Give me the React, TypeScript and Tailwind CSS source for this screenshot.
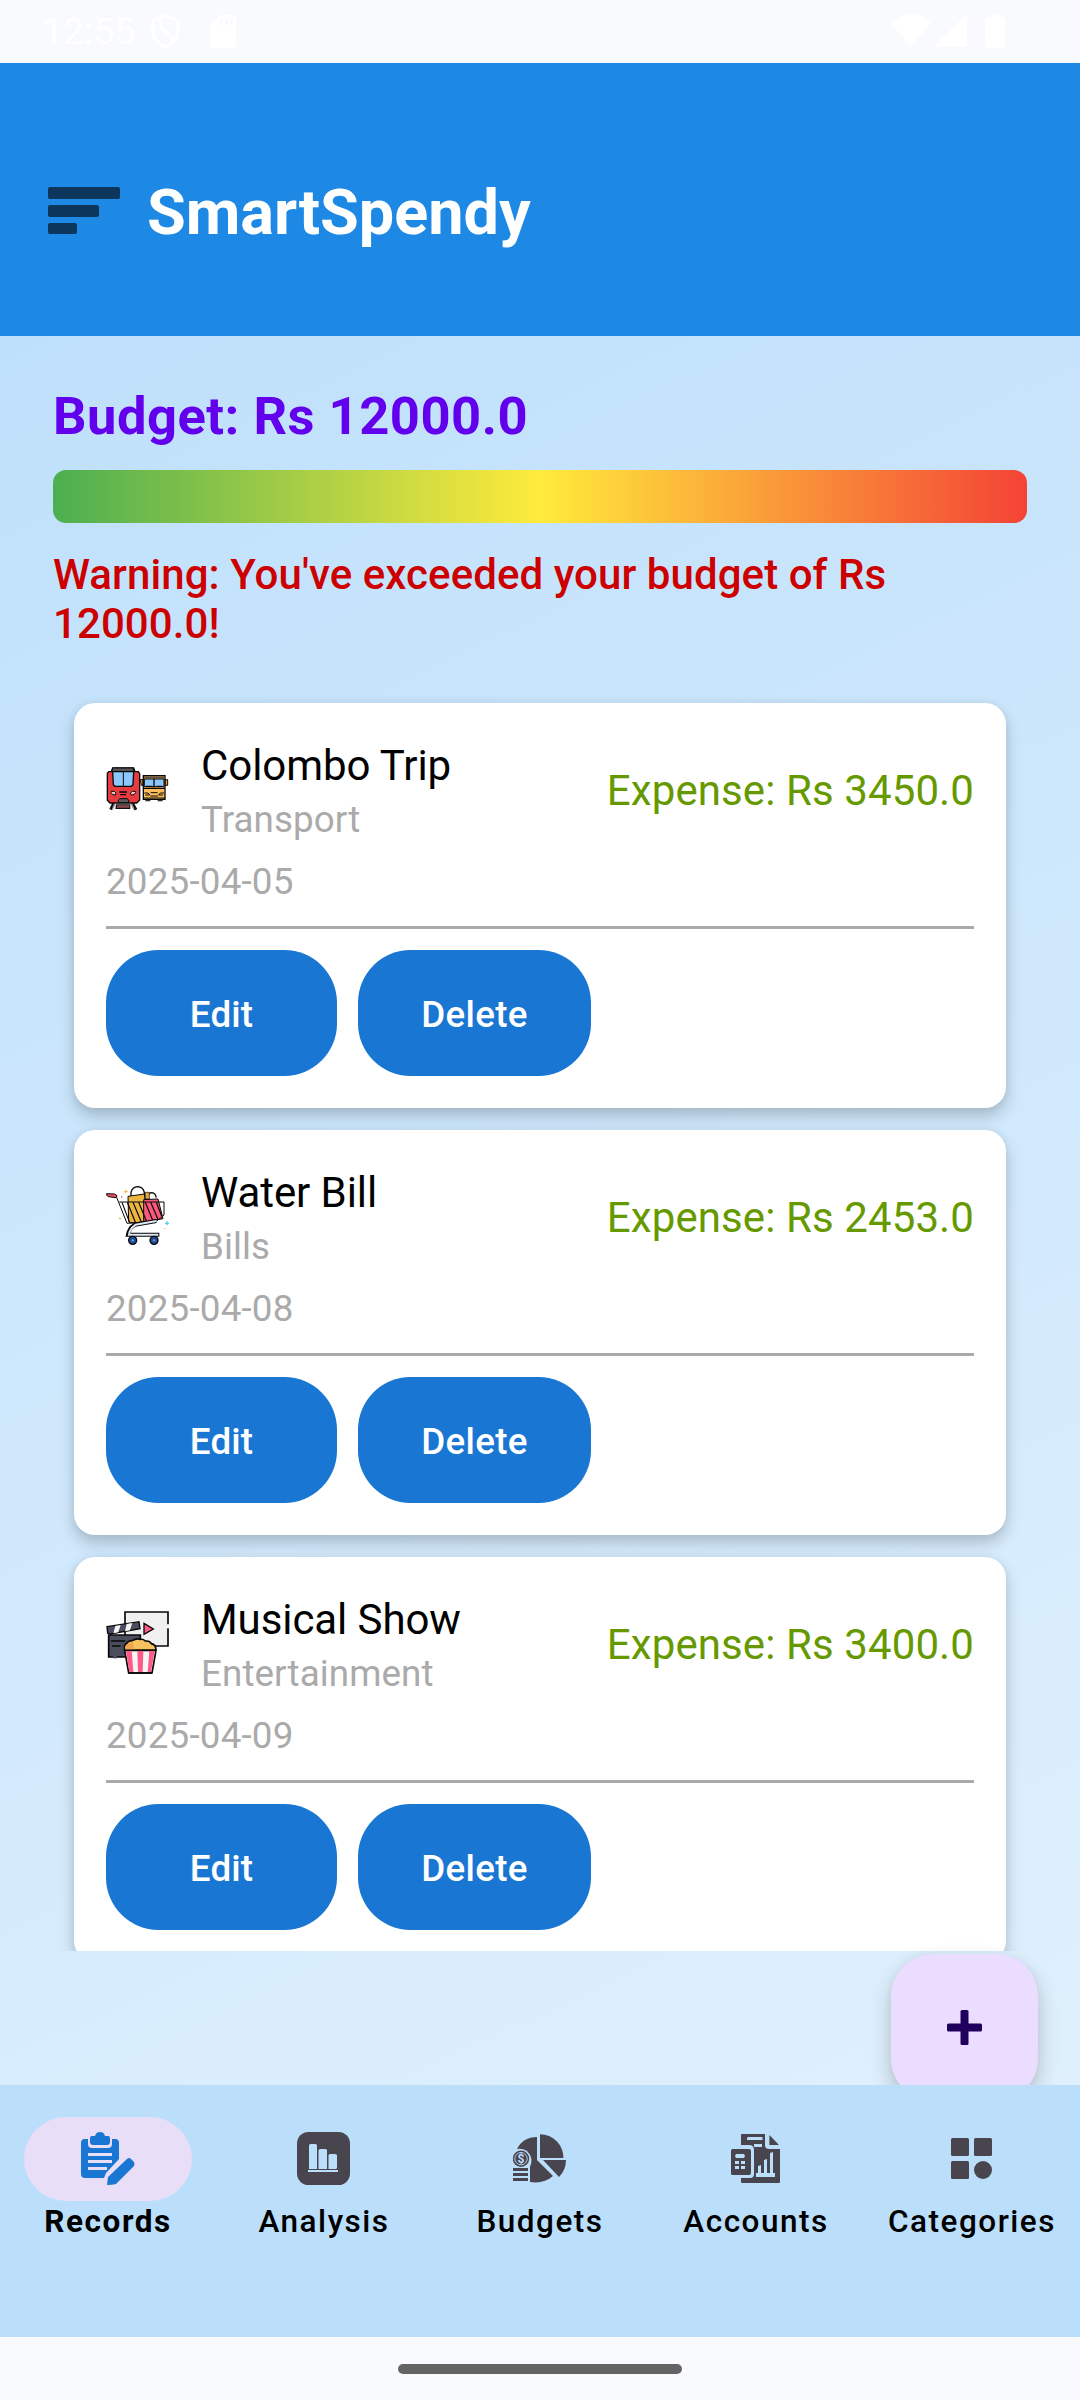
import React from "react";

type IconProps = { children: React.ReactNode };

function StatusBar() {
  return (
    <header className="flex h-[63px] shrink-0 items-start justify-between bg-[#f9fafd] pr-[75px] pl-[42px] text-white">
      <div className="flex items-start">
        <span className="mt-[9px] w-[109px] text-[37.5px] leading-[44px]">12:55</span>
        <svg className="mt-[14px] h-[35px] w-[29px]" viewBox="0 0 29 35" fill="none" stroke="currentColor" strokeWidth="3.4">
          <path d="M14.5 2 27 6.5V16c0 8-5 14-12.500 17C7 30 2 24 2 16V6.500Z" />
          <path d="M9 4c-2 9 3 11 8 15 4 3 5 5 4 9" />
        </svg>
        <svg className="mt-[15px] ml-[30px] h-[33px] w-[26px]" viewBox="0 0 26 33">
          <path fill="currentColor" d="M10 0h13a3 3 0 0 1 3 3v27a3 3 0 0 1-3 3H3a3 3 0 0 1-3-3V10Z" />
          <path fill="#f9fafd" d="M10 4h3v6h-3zM15 4h3v6h-3zM20 4h3v6h-3z" />
        </svg>
      </div>
      <div className="mt-[14px] flex items-start">
        <svg className="h-[33px] w-[40px]" viewBox="0 0 40 33" fill="currentColor">
          <path d="M0 9C12-3 28-3 40 9L20 33Z" />
        </svg>
        <svg className="ml-[2px] h-[33px] w-[34px]" viewBox="0 0 34 33" fill="currentColor">
          <path d="M34 0v33H0Z" />
        </svg>
        <svg className="ml-[18px] h-[34px] w-[20px]" viewBox="0 0 20 34" fill="currentColor">
          <path d="M6 0h8v3.500h4a2 2 0 0 1 2 2V32a2 2 0 0 1-2 2H2a2 2 0 0 1-2-2V5.500a2 2 0 0 1 2-2h4Z" />
        </svg>
      </div>
    </header>
  );
}

function TopBar() {
  return (
    <div className="flex h-[273px] shrink-0 items-start bg-[#1e88e5] pl-[48px]">
      <button className="mt-[124px] flex flex-col items-start gap-[6px]" aria-label="Menu">
        <span className="h-[12px] w-[72px] rounded-[2px] bg-[#0c365c]" />
        <span className="h-[11.500px] w-[51px] rounded-[2px] bg-[#0c365c]" />
        <span className="h-[11.500px] w-[29px] rounded-[2px] bg-[#0c365c]" />
      </button>
      <h1 className="mt-[113px] ml-[27px] text-[63px] leading-[74px] font-bold text-white">SmartSpendy</h1>
    </div>
  );
}

function TransportIcon() {
  return (
    <svg className="size-[63px] shrink-0" viewBox="48 51 189 189">
      <path d="M71 190 62 209M127 190l11 19" stroke="#111" strokeWidth="9" />
      <path d="M75 190 67 209M124 190l8 19" stroke="#999" strokeWidth="4" />
      <path d="M78 193h43v14H76z" fill="#111" />
      <path d="M82 196h36v7H80z" fill="#8d4b50" />
      <path d="M56 95h8l4-11h63l4 11h10l4 6v79l-9 9H60l-8-8V100Z" fill="#e53b41" stroke="#080808" strokeWidth="4" />
      <path d="M68 84h62v10H66z" fill="#5b5b60" stroke="#080808" strokeWidth="3" />
      <path d="M68 95h63l-2 39-5 5H75l-5-5Z" fill="#8cc8ff" stroke="#080808" strokeWidth="4" />
      <path d="M100 94v45" stroke="#080808" strokeWidth="3" />
      <path d="M64 154h9l5 5-2 6-8-1-5-6ZM136 154h-9l-6 5 3 6 8-1 5-6Z" fill="#f7c5c5" stroke="#080808" strokeWidth="3" />
      <path d="M88 156h23M91 164h17" stroke="#080808" strokeWidth="4" />
      <path d="M85 188v-8l5-4h21l5 4v8Z" fill="#5b5b60" stroke="#080808" strokeWidth="3" />
      <path d="M151 119h8v17h-5zM225 119h8v17h-8z" fill="#f5a623" stroke="#080808" strokeWidth="3" />
      <path d="M166 176h15v8h-15zM203 176h15v8h-15z" fill="#333" />
      <path d="M160 107h65v71h-65z" fill="#ffbd5b" stroke="#080808" strokeWidth="4" />
      <path d="M162 109h61v6h-61z" fill="#5b5144" />
      <path d="M163 117h59v23h-59z" fill="#8cc8ff" stroke="#080808" strokeWidth="3" />
      <path d="M192 116v26M168 139h20M199 139h18M160 145h65" stroke="#080808" strokeWidth="4" />
      <path d="M163 159h11l5 6h-13M222 159h-11l-5 6h13M182 158h21M181 168h23M160 174h65" fill="none" stroke="#080808" strokeWidth="3" />
    </svg>
  );
}

function CartIcon() {
  return (
    <svg className="size-[63px] shrink-0" viewBox="48 72 189 189">
      <path d="M123 110V97q4-16 20-17 17 1 20 18v10M173 116v-9q3-9 13-9 10 1 13 15" fill="none" stroke="#080808" strokeWidth="4" />
      <path d="M166 97h12v20h-12z" fill="#e6a93c" stroke="#080808" strokeWidth="2" />
      <path d="m114 109 49-7 10 83-50 4-7-4Z" fill="#ecb541" stroke="#080808" strokeWidth="3" />
      <path d="m161 119 43-2 15 59-50 9-8-2Z" fill="#f9597a" stroke="#080808" strokeWidth="3" />
      <path d="m50 101 24 1 7 5-3 6-22-3-6-4Z" fill="#ef5065" stroke="#080808" strokeWidth="3" />
      <path d="m80 112 31 78 89-7 22-18V126H88" fill="none" stroke="#080808" strokeWidth="3" />
      <path
        d="m96 127 23 61M112 127l24 60M129 127l25 59M146 127l24 58M166 127l23 56M182 127l22 51M199 127l16 41"
        stroke="#080808"
        strokeWidth="3.5"
      />
      <path d="m199 183-64 11-12 9-7 13-2 8h94" fill="none" stroke="#080808" strokeWidth="12" />
      <path d="m199 183-62 11-11 9-7 12-2 9h88" fill="none" stroke="#dce8f3" strokeWidth="6" />
      <circle cx="128" cy="241" r="12" fill="#214c9a" stroke="#080808" strokeWidth="4" />
      <circle cx="192" cy="241" r="12" fill="#214c9a" stroke="#080808" strokeWidth="4" />
      <path d="M124 241h8M128 237v8M188 241h8M192 237v8" stroke="#8ab4e8" strokeWidth="2" />
      <path d="M102 95h12M107 90v10" stroke="#efb74a" strokeWidth="3" />
      <path d="M225 190h12M231 184v12" stroke="#55c9f2" strokeWidth="4" />
      <path d="M93 109h4v4h-4z" fill="#f9597a" />
      <path d="M87 174h6v3h-6z" fill="#7ed321" />
      <path d="M222 204h4v3h-4z" fill="#efb74a" />
    </svg>
  );
}

function CinemaIcon() {
  return (
    <svg className="size-[63px] shrink-0" viewBox="48 63 189 189">
      <path d="M105 66h129v102H105z" fill="#f0f0f0" stroke="#080808" strokeWidth="5" />
      <path d="M231 103h6v12h-6z" fill="#fff" />
      <path d="m162 100 28 17-28 16Z" fill="#ff5b89" stroke="#080808" strokeWidth="4" />
      <path d="M56 135h95v66H56z" fill="#4a4d5e" stroke="#080808" strokeWidth="5" />
      <path d="m51 110 96-15 3 21-90 16-7-2Z" fill="#4a4d5e" stroke="#080808" strokeWidth="4" />
      <path d="m76 108 16-3-7 22-15 3ZM110 102l17-3-7 22-15 3Z" fill="#f5f5f5" />
      <path d="M63 153h43M66 168h26" stroke="#080808" strokeWidth="5" />
      <path d="M69 196h12v9H69z" fill="#4a4d5e" />
      <path d="m104 181 12 68h70l12-68Z" fill="#f5f5f5" stroke="#080808" strokeWidth="5" />
      <path d="m108 183 17-1 5 64h-12ZM142 182h18l-2 64h-14ZM178 182h16l-11 64h-10Z" fill="#ff5b89" />
      <path d="m116 249h70" stroke="#080808" strokeWidth="5" />
      <path
        d="M104 180q-4-16 8-21 2-6 15-7 11-8 24-4 9-1 15 5 14-1 18 8 14 3 14 19Z"
        fill="#f7c35f"
        stroke="#080808"
        strokeWidth="5"
      />
      <path d="M106 178q-2-13 10-18l12-6 5 24Z" fill="#f2a54c" />
    </svg>
  );
}

type Entry = {
  title: string;
  category: string;
  date: string;
  amount: string;
  icon: React.ReactNode;
};

const entries: Entry[] = [
  { title: "Colombo Trip", category: "Transport", date: "2025-04-05", amount: "Expense: Rs 3450.0", icon: <TransportIcon /> },
  { title: "Water Bill", category: "Bills", date: "2025-04-08", amount: "Expense: Rs 2453.0", icon: <CartIcon /> },
  { title: "Musical Show", category: "Entertainment", date: "2025-04-09", amount: "Expense: Rs 3400.0", icon: <CinemaIcon /> },
];

function RecordCard({ entry }: { entry: Entry }) {
  return (
    <article className="h-[405px] shrink-0 rounded-[21px] bg-white p-[32px] shadow-[0_8px_16px_rgba(0,0,0,0.2),0_0_8px_rgba(0,0,0,0.05)]">
      <div className="flex h-[107px] items-center">
        {entry.icon}
        <div className="ml-[32px] h-[107px] flex-1 pt-[2px]">
          <h2 className="text-[42px] leading-[58px] tracking-[-0.08px] text-black">{entry.title}</h2>
          <p className="text-[36.75px] leading-[49px] tracking-[0.1px] text-[#aaaaaa]">{entry.category}</p>
        </div>
        <p className="pt-[4px] text-[42px] leading-[56px] tracking-[0.1px] text-[#669900]">{entry.amount}</p>
      </div>
      <p className="mt-[15px] text-[36.75px] leading-[49px] tracking-[0.2px] text-[#aaaaaa]">{entry.date}</p>
      <hr className="mt-[20px] h-[3px] border-0 bg-[#aaaaaa]" />
      <div className="mt-[21px] flex gap-[21px]">
        <button className="h-[126px] w-[231px] rounded-[52.5px] bg-[#1976d2] pt-[3px] text-[36.75px] font-medium tracking-[0.15px] text-white">
          Edit
        </button>
        <button className="h-[126px] w-[233px] rounded-[52.5px] bg-[#1976d2] pt-[3px] text-[36.75px] font-medium tracking-[0.3px] text-white">
          Delete
        </button>
      </div>
    </article>
  );
}

function NavSvg({ children }: IconProps) {
  return (
    <svg className="size-[54px]" viewBox="0 0 54 54" fill="currentColor">
      {children}
    </svg>
  );
}

const bar = "#bbdefb";

const navItems = [
  {
    label: "Records",
    icon: (
      <NavSvg>
        <path d="M4 7h3v5q0 4 4 4h16q4 0 4-4V7h3q4 0 4 4v16L25 41l-2 5H4q-4 0-4-4V11q0-4 4-4Z" />
        <path d="M9 5.500Q9 4 11 4h3Q15 0 19 0t5 4h3q2 0 2 2v4q0 3-3 3H12q-3 0-3-3Z" />
        <path d="M7 21h24v3H7zM7 28h24v3H7zM7 35h19v3H7z" fill="#e8def8" />
        <path d="M27 45 46 27q2-2 4 0l3 3q1 2 0 4L35 52q-4 1-9 1Z" />
      </NavSvg>
    ),
  },
  {
    label: "Analysis",
    icon: (
      <NavSvg>
        <rect width="53" height="53" rx="11.5" />
        <path
          d="M13.500 12h5q1.500 0 1.500 1.500V37h-8V13.500q0-1.500 1.500-1.500ZM23.500 17h5q1.500 0 1.500 1.500V37h-8.500V18.500q0-1.500 2-1.500ZM33 22h5q2 0 2 1.500V35q0 2-1 2h-7.500V23.500q0-1.500 1.500-1.500ZM11 38h30v2H11z"
          fill={bar}
        />
      </NavSvg>
    ),
  },
  {
    label: "Budgets",
    icon: (
      <NavSvg>
        <path d="M27 2.300A23.500 23.500 0 0 1 50.500 26H27Z" />
        <path d="M30 28h23q0 10-7 17Z" />
        <path d="M24 5v23l16 16q-9 8-23 6V35q4-9-3-16-5-3-10-2Q10 5 24 5Z" />
        <circle cx="8" cy="26.700" r="8.200" />
        <circle cx="8" cy="26.700" r="6.200" fill="none" stroke={bar} strokeWidth="0.900" />
        <text x="8" y="31" textAnchor="middle" fontSize="12" fontWeight="700" fill={bar}>
          $
        </text>
        <path d="M0 36h15v3H0zM0 41h15v3H0zM0 46h15v3H0z" />
      </NavSvg>
    ),
  },
  {
    label: "Accounts",
    icon: (
      <NavSvg>
        <path d="M13 2h23v11q0 4 4 4h11v33q0 1-1 1H13q-1 0-1-1v-4h9q4 0 4-4V18q0-5-5-5h-8V3q0-1 1-1ZM40.400 3 50 13h-9.600Z" />
        <path d="M3.500 17H20q2 0 2 2v22q0 2-2 2H3.500Q2 43 2 41.500v-23Q2 17 3.500 17Z" />
        <path
          d="M19 5h14.500v3H18V6ZM25 12h8v3h-8ZM7 22h8l1 2-1 2H7l-1-2ZM6 29h4v3H6zM12 29h4v3h-4zM6 34h4v3H6zM12 34h4v3h-4zM29 34l3-1v8h3V28l3-1v14h3V21l3-1v21h2v4H27v-4h2Z"
          fill={bar}
        />
      </NavSvg>
    ),
  },
  {
    label: "Categories",
    icon: (
      <NavSvg>
        <rect x="6" y="6" width="18" height="18" rx="1.500" />
        <rect x="29" y="6" width="18" height="18" rx="1.500" />
        <rect x="6" y="29" width="18" height="18" rx="1.500" />
        <circle cx="38" cy="38" r="9" />
      </NavSvg>
    ),
  },
];

function BottomNav() {
  return (
    <nav className="grid h-[252px] shrink-0 grid-cols-5 bg-[#bbdefb]">
      {navItems.map((item, i) => (
        <a key={item.label} className="flex flex-col items-center pt-[32px]">
          <span
            className={
              i === 0
                ? "flex h-[84px] w-[168px] justify-center rounded-full bg-[#e8def8] pt-[15px] text-[#1976d2]"
                : "flex h-[84px] w-[168px] justify-center pt-[15px] text-[#49454f]"
            }
          >
            {item.icon}
          </span>
          <span
            className={
              i === 0
                ? "mt-[2px] text-[31.5px] leading-[38px] font-bold tracking-[1.55px] text-black"
                : "mt-[2px] text-[31.5px] leading-[38px] font-medium tracking-[1.5px] text-black"
            }
          >
            {item.label}
          </span>
        </a>
      ))}
    </nav>
  );
}

export default function App() {
  return (
    <div className="flex h-[2400px] w-[1080px] flex-col overflow-hidden bg-[#f9fafd] font-['Roboto',sans-serif]">
      <StatusBar />
      <div className="flex h-[2274px] flex-col bg-[linear-gradient(154.6deg,#bbdefb,#e3f2fd)]">
        <TopBar />
        <main className="relative flex h-[1749px] shrink-0 flex-col overflow-hidden px-[53px]">
          <p className="mt-[49px] text-[52.5px] leading-[62px] font-bold tracking-[0.5px] text-[#6200ee]">Budget: Rs 12000.0</p>
          <div className="mt-[23px] h-[53px] shrink-0 rounded-[13px] bg-[linear-gradient(90deg,#4caf50,#ffeb3b,#f44336)]" />
          <p className="mt-[27px] h-[98px] shrink-0 text-[42px] leading-[49px] font-medium tracking-[0.07px] text-[#cc0000]">
            Warning: You've exceeded your budget of Rs 12000.0!
          </p>
          <section className="mt-[34px] flex h-[1269px] shrink-0 flex-col gap-[22px] overflow-hidden px-[21px] pt-[21px]">
            {entries.map((entry) => (
              <RecordCard key={entry.date} entry={entry} />
            ))}
          </section>
          <button
            aria-label="Add record"
            className="absolute top-[1618px] left-[891px] flex size-[147px] items-center justify-center rounded-[42px] bg-[#eaddff] shadow-[0_10px_22px_rgba(0,0,0,0.2),0_0_8px_rgba(0,0,0,0.04)]"
          >
            <svg className="size-[35px]" viewBox="0 0 35 35" fill="#21005d">
              <rect x="13.500" width="8" height="35" rx="1.500" />
              <rect y="13.500" width="35" height="8" rx="1.500" />
            </svg>
          </button>
        </main>
        <BottomNav />
      </div>
      <footer className="flex h-[63px] items-start justify-center pt-[27px]">
        <span className="h-[10px] w-[284px] rounded-full bg-[#646464]" />
      </footer>
    </div>
  );
}
